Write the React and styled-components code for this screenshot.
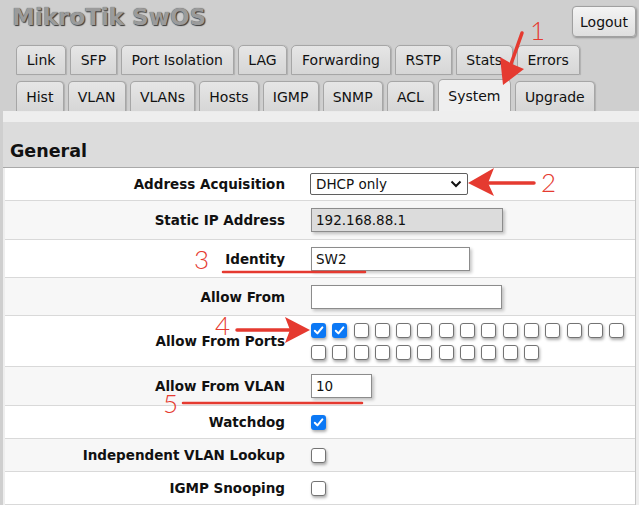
import React from 'react';
import styled, { createGlobalStyle } from 'styled-components';

const GlobalStyle = createGlobalStyle`
  html, body {
    margin: 0;
    padding: 0;
    background: #cfcfcf;
  }
  body {
    font-family: "DejaVu Sans", Verdana, sans-serif;
    color: #111;
  }
`;

const Page = styled.div`
  position: relative;
  width: 639px;
  height: 505px;
  overflow: hidden;
  background: #cfcfcf;
`;

const Header = styled.div`
  display: flex;
  justify-content: space-between;
  align-items: flex-start;
  height: 45px;
  padding: 0 3px 0 12px;
`;

const Title = styled.h1`
  margin: 3px 0 0;
  font-size: 23px;
  font-weight: bold;
  line-height: 28px;
  color: #9b9b9b;
  text-shadow: 1px 1px 1px #3a3a3a, 0 0 1px #555;
`;

const LogoutButton = styled.button`
  margin-top: 6px;
  width: 64px;
  height: 31px;
  padding: 0;
  font-family: "DejaVu Sans", Verdana, sans-serif;
  font-size: 14px;
  color: #111;
  border: 1px solid #a0a0a0;
  border-radius: 4px;
  background: linear-gradient(#f4f4f4, #dedede);
  box-shadow: 1px 1px 2px rgba(0, 0, 0, 0.3);
`;

const TabRow = styled.div`
  display: flex;
  align-items: flex-end;
  gap: 4px;
  height: 30px;
  padding-left: 16px;
  margin-top: ${p => p.$gap || 0}px;
`;

const Tab = styled.div`
  box-sizing: border-box;
  height: ${p => (p.$active ? 32 : 30)}px;
  padding: 0 ${p => p.$padX || 9.5}px;
  display: flex;
  align-items: center;
  font-size: 14px;
  color: #111;
  border: 1px solid #a6a6a6;
  border-bottom: ${p => (p.$open ? 'none' : '1px solid #a6a6a6')};
  border-radius: 5px 5px 0 0;
  background: ${p => (p.$active ? '#efefef' : 'linear-gradient(#e6e6e6, #d6d6d6)')};
  box-shadow: ${p => (p.$active ? 'none' : '1px 0 1px rgba(0, 0, 0, 0.15)')};
`;

const Panel = styled.div`
  margin-left: 3px;
  padding-top: 11px;
  background: #eeeeee;
  min-height: 400px;
`;

const SectionHead = styled.div`
  box-sizing: border-box;
  height: 46px;
  display: flex;
  align-items: flex-end;
  padding: 0 0 6px 7px;
  background: #dcdcdc;
  border-bottom: 1px solid #a9a9a9;
  font-size: 17.5px;
  font-weight: bold;
  line-height: 20px;
`;

const Table = styled.div`
  margin: 0 3px 0 2px;
  background: #fff;
  border-right: 1px solid #c6c6c6;
`;

const Row = styled.div`
  display: grid;
  grid-template-columns: 280px 1fr;
  align-items: center;
  min-height: 32px;
  background: ${p => (p.$alt ? '#f7f7f7' : '#ffffff')};
  border-bottom: 1px solid #d9d9d9;
`;

const Label = styled.div`
  text-align: right;
  font-size: 13.5px;
  font-weight: bold;
  color: #111;
`;

const Value = styled.div`
  display: flex;
  align-items: center;
  padding: ${p => p.$pad ?? 5}px 0 ${p => p.$pad ?? 5}px 26px;
`;

const TextInput = styled.input`
  box-sizing: border-box;
  width: ${p => p.$w}px;
  height: 24px;
  margin: 0;
  padding: 0 4px;
  font-family: "DejaVu Sans", Verdana, sans-serif;
  font-size: 13.5px;
  color: #111;
  border: 1px solid #8c8c8c;
  border-radius: 0;
  outline: none;
  background: ${p => (p.$disabled ? '#dcdcdc' : '#fff')};
  box-shadow: 2px 2px 3px rgba(0, 0, 0, 0.22);
`;

const SelectBox = styled.div`
  box-sizing: border-box;
  width: 158px;
  height: 22px;
  margin-left: -1px;
  padding: 0 5px 0 5px;
  display: flex;
  align-items: center;
  justify-content: space-between;
  font-size: 13.5px;
  border: 1px solid #5f5f5f;
  border-radius: 2px;
  background: #fff;
`;

const Ports = styled.div`
  display: flex;
  flex-wrap: wrap;
  gap: 7px 6.3px;
  width: 322px;
`;

const Box = styled.span`
  box-sizing: border-box;
  width: 15px;
  height: 15px;
  flex: none;
  display: inline-flex;
  align-items: center;
  justify-content: center;
  border-radius: 3px;
  border: ${p => (p.$on ? 'none' : '1.6px solid #737373')};
  background: ${p => (p.$on ? '#0b78f5' : '#fff')};
  box-shadow: 1px 2px 3px rgba(0, 0, 0, 0.32);
`;

const Overlay = styled.svg`
  position: absolute;
  top: 0;
  left: 0;
  pointer-events: none;
`;

const Mark = styled.text`
  font-family: Lato, "Liberation Sans", sans-serif;
  font-weight: 300;
  font-size: 26px;
  fill: #e53a30;
`;

const Check = ({ on }) => (
  <Box $on={on}>
    {on && (
      <svg width="11" height="11" viewBox="0 0 11 11">
        <path d="M1.8 5.8 L4.4 8.4 L9.4 2.4" fill="none" stroke="#fff" strokeWidth="2" strokeLinecap="round" strokeLinejoin="round" />
      </svg>
    )}
  </Box>
);

const row1 = ['Link', 'SFP', 'Port Isolation', 'LAG', 'Forwarding', 'RSTP', 'Stats', 'Errors'];
const row2 = ['Hist', 'VLAN', 'VLANs', 'Hosts', 'IGMP', 'SNMP', 'ACL', 'System', 'Upgrade'];
const ports = Array.from({ length: 26 }, (_, i) => i < 2);

const red = '#e53a30';

export default function App() {
  return (
    <Page>
      <GlobalStyle />
      <Header>
        <Title>MikroTik SwOS</Title>
        <LogoutButton>Logout</LogoutButton>
      </Header>
      <TabRow>
        {row1.map(t => <Tab key={t} $padX={9.7}>{t}</Tab>)}
      </TabRow>
      <TabRow $gap={6}>
        {row2.map(t => (
          <Tab key={t} $open $padX={9.2} $active={t === 'System'}>{t}</Tab>
        ))}
      </TabRow>
      <Panel>
        <SectionHead>General</SectionHead>
        <Table>
          <Row>
            <Label>Address Acquisition</Label>
            <Value>
              <SelectBox>
                <span>DHCP only</span>
                <svg width="12" height="8" viewBox="0 0 12 8">
                  <path d="M1.5 1.5 L6 6 L10.5 1.5" fill="none" stroke="#111" strokeWidth="2" />
                </svg>
              </SelectBox>
            </Value>
          </Row>
          <Row $alt>
            <Label>Static IP Address</Label>
            <Value $pad={7}>
              <TextInput $w={192} $disabled readOnly value="192.168.88.1" />
            </Value>
          </Row>
          <Row>
            <Label>Identity</Label>
            <Value $pad={6.5}>
              <TextInput $w={159} readOnly value="SW2" />
            </Value>
          </Row>
          <Row $alt>
            <Label>Allow From</Label>
            <Value $pad={6.5}>
              <TextInput $w={191} readOnly value="" />
            </Value>
          </Row>
          <Row>
            <Label>Allow From Ports</Label>
            <Value $pad={6.5}>
              <Ports>
                {ports.map((on, i) => <Check key={i} on={on} />)}
              </Ports>
            </Value>
          </Row>
          <Row $alt>
            <Label>Allow From VLAN</Label>
            <Value $pad={7}>
              <TextInput $w={61} readOnly value="10" />
            </Value>
          </Row>
          <Row>
            <Label>Watchdog</Label>
            <Value><Check on /></Value>
          </Row>
          <Row $alt>
            <Label>Independent VLAN Lookup</Label>
            <Value><Check /></Value>
          </Row>
          <Row>
            <Label>IGMP Snooping</Label>
            <Value><Check /></Value>
          </Row>
        </Table>
      </Panel>

      <Overlay width="639" height="505" viewBox="0 0 639 505">
        <line x1="522" y1="33" x2="511" y2="64" stroke={red} strokeWidth="3.5" strokeLinecap="round" />
        <polygon points="503,85 500,57 512,64 524,69" fill={red} />
        <Mark x="530" y="40">1</Mark>

        <line x1="534" y1="183" x2="488" y2="183" stroke={red} strokeWidth="3.5" strokeLinecap="round" />
        <polygon points="468,183 494,168 488,183 494,196" fill={red} />
        <Mark x="541" y="192">2</Mark>

        <Mark x="194" y="269">3</Mark>
        <line x1="223" y1="272" x2="365" y2="272" stroke={red} strokeWidth="2.5" strokeLinecap="round" />

        <Mark x="215" y="335">4</Mark>
        <line x1="237" y1="330" x2="290" y2="330" stroke={red} strokeWidth="3.5" strokeLinecap="round" />
        <polygon points="310,330 285,317 290,330 285,343" fill={red} />

        <Mark x="163" y="413">5</Mark>
        <line x1="183" y1="403" x2="362" y2="403" stroke={red} strokeWidth="2.5" strokeLinecap="round" />
      </Overlay>
    </Page>
  );
}
